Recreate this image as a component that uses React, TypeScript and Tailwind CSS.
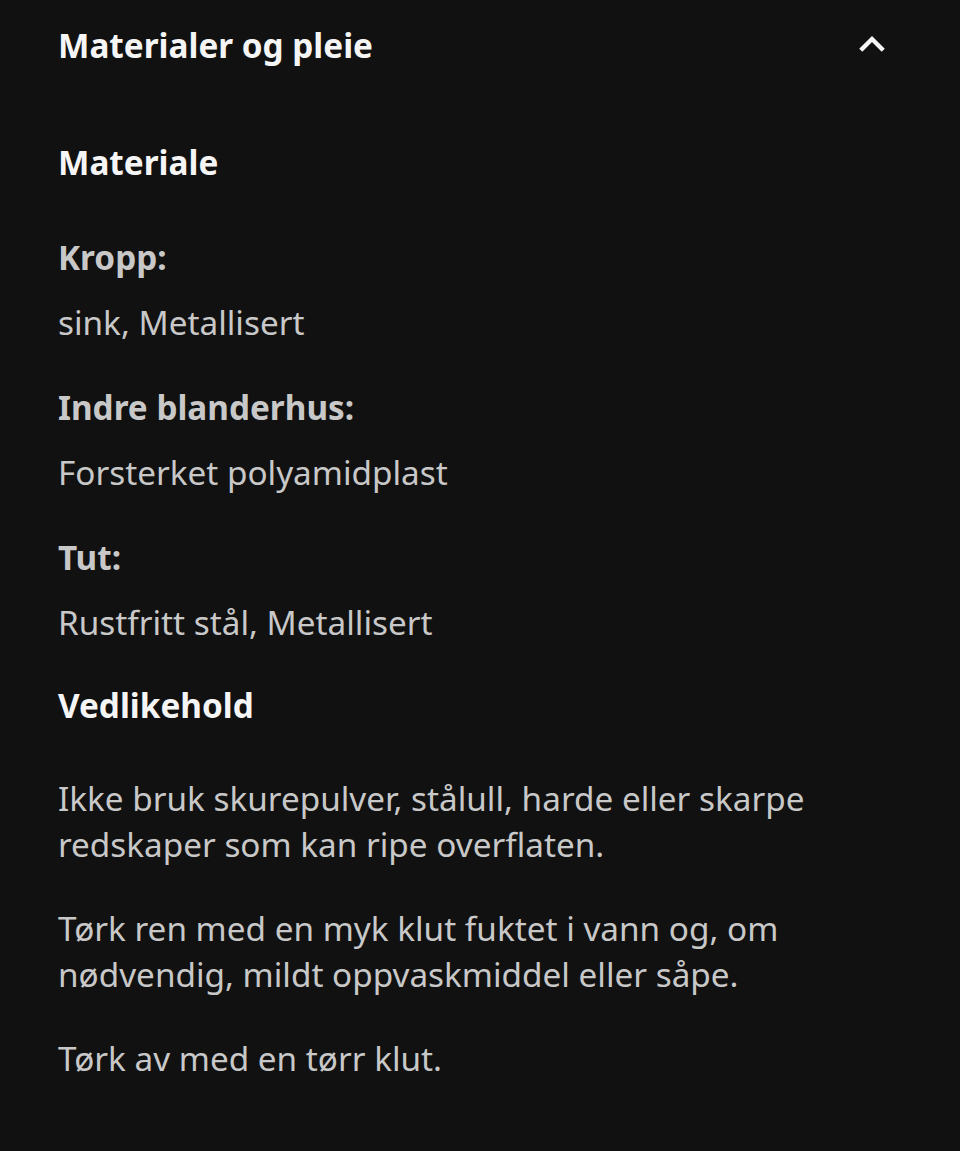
export default function App() {
  const items = [
    { label: "Kropp:", value: "sink, Metallisert" },
    { label: "Indre blanderhus:", value: "Forsterket polyamidplast" },
    { label: "Tut:", value: "Rustfritt stål, Metallisert" },
  ];

  return (
    <div
      className="min-h-[1151px] w-full bg-[#111111] px-[58px] pt-[22px] pb-10 text-[33.3px] leading-[46px]"
      style={{ fontFamily: '"Noto Sans", sans-serif' }}
    >
      {/* accordion header */}
      <div className="flex items-center justify-between">
        <h2 className="font-bold text-[#f5f5f5]">Materialer og pleie</h2>
        <svg width="36" height="36" viewBox="0 0 24 24" className="mr-[12px]">
          <path d="M4.5 15.5 12 8l7.5 7.5" fill="none" stroke="#f5f5f5" strokeWidth="2.9" />
        </svg>
      </div>

      <h3 className="mt-[71px] font-bold text-[#f5f5f5]">Materiale</h3>

      <div className="mt-[49px] flex flex-col gap-[39px]">
        {items.map((it) => (
          <div key={it.label} className="flex flex-col gap-[19px]">
            <div className="font-bold text-[#c8c8c8]">{it.label}</div>
            <div className="text-[#c8c8c8]">{it.value}</div>
          </div>
        ))}
      </div>

      <h3 className="mt-[37px] font-bold text-[#f5f5f5]">Vedlikehold</h3>

      <div className="mt-[47px] flex flex-col gap-[38px] text-[#c8c8c8]">
        <p>
          Ikke bruk skurepulver, stålull, harde eller skarpe
          <br />
          redskaper som kan ripe overflaten.
        </p>
        <p>
          Tørk ren med en myk klut fuktet i vann og, om
          <br />
          nødvendig, mildt oppvaskmiddel eller såpe.
        </p>
        <p>Tørk av med en tørr klut.</p>
      </div>
    </div>
  );
}
